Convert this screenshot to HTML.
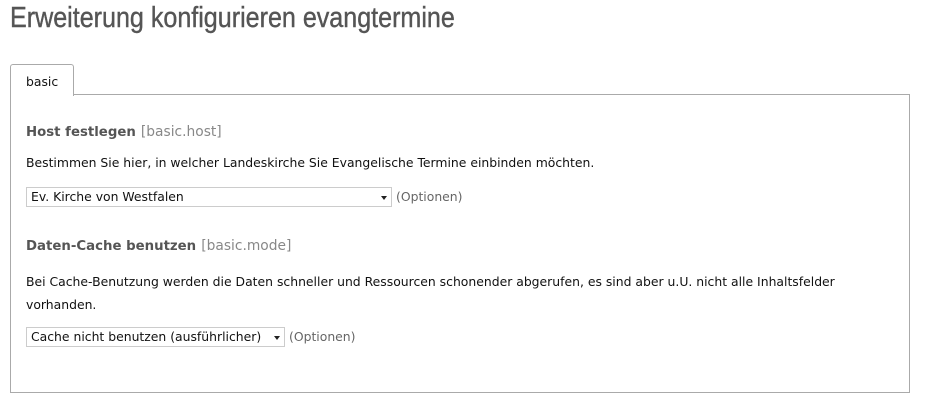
<!DOCTYPE html>
<html><head><meta charset="utf-8"><style>
body{margin:0;background:#fff;font-family:"DejaVu Sans",Verdana,sans-serif;color:#111;width:931px;height:403px;overflow:hidden;position:relative}
.t{position:absolute;left:10px;top:2px;font-family:"Liberation Sans",sans-serif;font-size:29px;color:#555;white-space:nowrap;transform:scaleX(0.865);transform-origin:0 0;-webkit-text-stroke:0.4px #555}
.tab{position:absolute;left:10px;top:64px;width:62px;height:31px;border:1px solid #aaa;border-bottom:none;border-radius:3px 3px 0 0;background:#fff;z-index:2;font-size:12.4px;line-height:33px;text-indent:15px}
.panel{position:absolute;left:10px;top:94px;width:898px;height:297px;border:1px solid #aaa}
.a{position:absolute;left:26px;white-space:nowrap}
h{font-weight:bold;color:#555;font-size:13.3px}
.g{color:#888;font-size:13.8px}
.p{font-size:12.4px}
.sel{position:absolute;left:26px;height:18px;border:1px solid #ccc;font-size:12.4px;line-height:18px;text-indent:4px;box-sizing:content-box;white-space:nowrap}
.sel:after{content:"";position:absolute;right:4px;top:8px;border-left:3.5px solid transparent;border-right:3.5px solid transparent;border-top:4px solid #222}
.o{position:absolute;font-size:12.4px;color:#666;white-space:nowrap}
</style></head><body>
<div class="t">Erweiterung konfigurieren evangtermine</div>
<div class="tab">basic</div>
<div class="panel"></div>
<div class="a" style="top:121px"><h>Host festlegen</h> <span class="g">[basic.host]</span></div>
<div class="a p" style="top:155px">Bestimmen Sie hier, in welcher Landeskirche Sie Evangelische Termine einbinden möchten.</div>
<div class="sel" style="top:187px;width:364px">Ev. Kirche von Westfalen</div>
<div class="o" style="left:396px;top:189px">(Optionen)</div>
<div class="a" style="top:235px"><h>Daten-Cache benutzen</h> <span class="g">[basic.mode]</span></div>
<div class="a p" style="top:270px;line-height:23px">Bei Cache-Benutzung werden die Daten schneller und Ressourcen schonender abgerufen, es sind aber u.U. nicht alle Inhaltsfelder<br>vorhanden.</div>
<div class="sel" style="top:327px;width:257px">Cache nicht benutzen (ausführlicher)</div>
<div class="o" style="left:289px;top:329px">(Optionen)</div>
</body></html>
